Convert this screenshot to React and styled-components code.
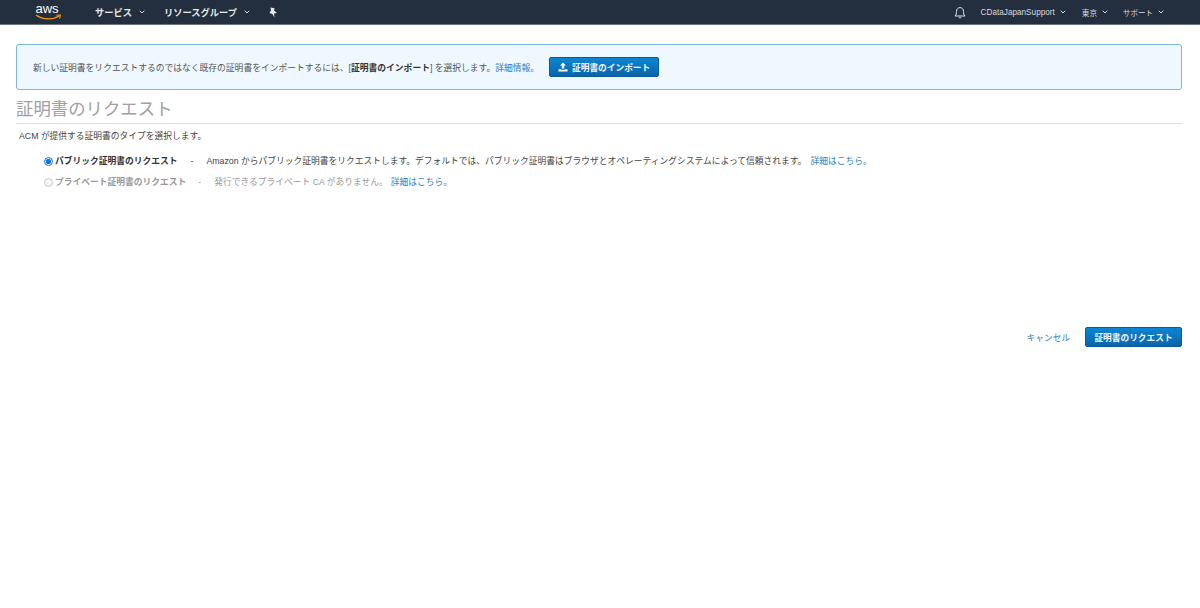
import React from "react";
import styled, { createGlobalStyle } from "styled-components";

const GlobalStyle = createGlobalStyle`
  html, body {
    margin: 0;
    padding: 0;
    background: #fff;
  }
  body {
    font-family: "Liberation Sans", "Noto Sans CJK JP", sans-serif;
    color: #444;
    overflow: hidden;
  }
`;

const Page = styled.div`
  width: 1200px;
  height: 608px;
`;

const NavBar = styled.header`
  height: 24px;
  background: #232f3e;
  border-bottom: 1px solid #6c7480;
  display: flex;
  align-items: center;
  color: #fff;
`;

const Logo = styled.svg`
  width: 27px;
  height: 22px;
  margin-left: 35px;
  margin-right: 33px;
`;

const NavItem = styled.div`
  display: flex;
  align-items: center;
  font-size: 9.25px;
  font-weight: 700;
  margin-right: ${props => props.gap}px;
  color: #e6e8ea;
`;

const NavRight = styled.div`
  margin-left: auto;
  display: flex;
  align-items: center;
  padding-right: 36px;
`;

const NavSmall = styled.div`
  display: flex;
  align-items: center;
  font-size: ${props => props.size}px;
  color: #d8dbdf;
  margin-left: ${props => props.gap}px;
`;

const Caret = styled.svg`
  width: 6px;
  height: 4px;
  margin-left: ${props => props.gap}px;
`;

const Content = styled.main`
  padding: 19px 18px 0 16px;
`;

const Notice = styled.div`
  height: 44px;
  background: #eff8ff;
  border: 1px solid #7fb4dc;
  border-radius: 3px;
  display: flex;
  align-items: center;
  padding-left: 16px;
  font-size: 8.77px;
  color: #555;
`;

const Strong = styled.b`
  color: #333;
`;

const TextLink = styled.a`
  color: #2f7fbe;
  margin-left: ${props => props.gap || 0}px;
`;

const PrimaryButton = styled.button`
  display: flex;
  align-items: center;
  justify-content: center;
  gap: 4px;
  width: ${props => props.width}px;
  height: 20px;
  padding: 0;
  border: 1px solid #0a5a98;
  border-radius: 2px;
  background: linear-gradient(#0b86d4, #0a64aa);
  color: #f2f7fb;
  font-family: inherit;
  font-size: 8.7px;
  font-weight: 700;
`;

const ImportButton = styled(PrimaryButton)`
  margin-left: 10px;
`;

const Title = styled.h1`
  margin: 8px 0 0;
  height: 25px;
  font-size: 17.4px;
  line-height: 22px;
  font-weight: 400;
  color: #a0a0a0;
  border-bottom: 1px solid #ddd;
`;

const Lead = styled.p`
  margin: 6px 0 0 3px;
  font-size: 8.75px;
  line-height: 13px;
  color: #444;
`;

const Options = styled.div`
  margin: 11px 0 0 28px;
  display: flex;
  flex-direction: column;
  gap: 8px;
`;

const Option = styled.label`
  display: flex;
  align-items: center;
  height: 13px;
  font-size: 8.75px;
  color: ${props => (props.disabled ? "#999" : "#444")};
`;

const Radio = styled.span`
  box-sizing: border-box;
  width: 9px;
  height: 9px;
  margin: 2px 2px 0 0;
  border-radius: 50%;
  border: 1px solid ${props => (props.checked ? "#1a73d8" : "#ccc")};
  background: ${props =>
    props.checked
      ? "radial-gradient(circle, #1a73d8 0 2.5px, #fff 3px)"
      : "#f4f4f4"};
`;

const OptionName = styled.b`
  font-weight: 700;
  color: ${props => (props.disabled ? "#999" : "#333")};
`;

const Dash = styled.span`
  margin: 0 ${props => props.right}px 0 ${props => props.left}px;
`;

const Footer = styled.div`
  margin-top: 139px;
  display: flex;
  justify-content: flex-end;
  align-items: center;
`;

const CancelLink = styled.a`
  font-size: 8.7px;
  color: #2f7fbe;
  margin-right: 15px;
`;

const DownCaret = ({ gap }) => (
  <Caret gap={gap} viewBox="0 0 6 4">
    <path d="M0.7 0.7 L3 3 L5.3 0.7" fill="none" stroke="#d5d9dd" strokeWidth="1" />
  </Caret>
);

const AwsLogo = () => (
  <Logo viewBox="0 0 27 22">
    <text x="0.5" y="12" fontSize="13" fill="#fff" fontFamily="Liberation Sans, sans-serif">
      aws
    </text>
    <path d="M1 14 C8 19 18 19 24 15" fill="none" stroke="#f90" strokeWidth="1.4" />
    <path d="M21.5 14.2 L25.5 14 L24.5 17.5" fill="none" stroke="#f90" strokeWidth="1.1" />
  </Logo>
);

const Pin = () => (
  <svg width="10" height="11" viewBox="0 0 10 11">
    <path
      d="M2.5 0.5 L6.5 1.2 L6 3.4 L9 6 L6 6.6 L6.5 10.5 L4.4 7 L1.4 6 L3 3.4 Z"
      fill="#e8eaec"
    />
  </svg>
);

const Bell = () => (
  <svg width="12" height="13" viewBox="0 0 12 13">
    <path
      d="M1 10 C2.4 8.6 2.4 7.4 2.5 5.4 C2.6 3 4 1.6 6 1.6 C8 1.6 9.4 3 9.5 5.4 C9.6 7.4 9.6 8.6 11 10 Z M4.8 11.2 C5.2 12.2 6.8 12.2 7.2 11.2"
      fill="none"
      stroke="#e4e7ea"
      strokeWidth="1"
    />
  </svg>
);

const UploadIcon = () => (
  <svg width="10" height="10" viewBox="0 0 10 10">
    <path d="M5 0.5 L8 3.6 H6.2 V6.6 H3.8 V3.6 H2 Z" fill="#fff" />
    <path d="M0.5 7.2 H3 V7.8 H7 V7.2 H9.5 V9.5 H0.5 Z" fill="#fff" />
  </svg>
);

export default function App() {
  return (
    <Page>
      <GlobalStyle />
      <NavBar>
        <AwsLogo />
        <NavItem gap={19}>
          サービス
          <DownCaret gap={7} />
        </NavItem>
        <NavItem gap={18}>
          リソースグループ
          <DownCaret gap={7} />
        </NavItem>
        <Pin />
        <NavRight>
          <Bell />
          <NavSmall gap={15} size={8.2}>
            CDataJapanSupport
            <DownCaret gap={5} />
          </NavSmall>
          <NavSmall gap={16} size={7.6}>
            東京
            <DownCaret gap={5} />
          </NavSmall>
          <NavSmall gap={15} size={7.5}>
            サポート
            <DownCaret gap={5} />
          </NavSmall>
        </NavRight>
      </NavBar>
      <Content>
        <Notice>
          <span>
            新しい証明書をリクエストするのではなく既存の証明書をインポートするには、[
            <Strong>証明書のインポート</Strong>] を選択します。
            <TextLink>詳細情報。</TextLink>
          </span>
          <ImportButton width={110}>
            <UploadIcon />
            証明書のインポート
          </ImportButton>
        </Notice>
        <Title>証明書のリクエスト</Title>
        <Lead>ACM が提供する証明書のタイプを選択します。</Lead>
        <Options>
          <Option>
            <Radio checked />
            <OptionName>パブリック証明書のリクエスト</OptionName>
            <Dash left={13} right={13}>-</Dash>
            Amazon からパブリック証明書をリクエストします。デフォルトでは、パブリック証明書はブラウザとオペレーティングシステムによって信頼されます。
            <TextLink gap={4}>詳細はこちら。</TextLink>
          </Option>
          <Option disabled>
            <Radio />
            <OptionName disabled>プライベート証明書のリクエスト</OptionName>
            <Dash left={12} right={13}>-</Dash>
            発行できるプライベート CA がありません。
            <TextLink gap={3}>詳細はこちら。</TextLink>
          </Option>
        </Options>
        <Footer>
          <CancelLink>キャンセル</CancelLink>
          <PrimaryButton width={97}>証明書のリクエスト</PrimaryButton>
        </Footer>
      </Content>
    </Page>
  );
}
